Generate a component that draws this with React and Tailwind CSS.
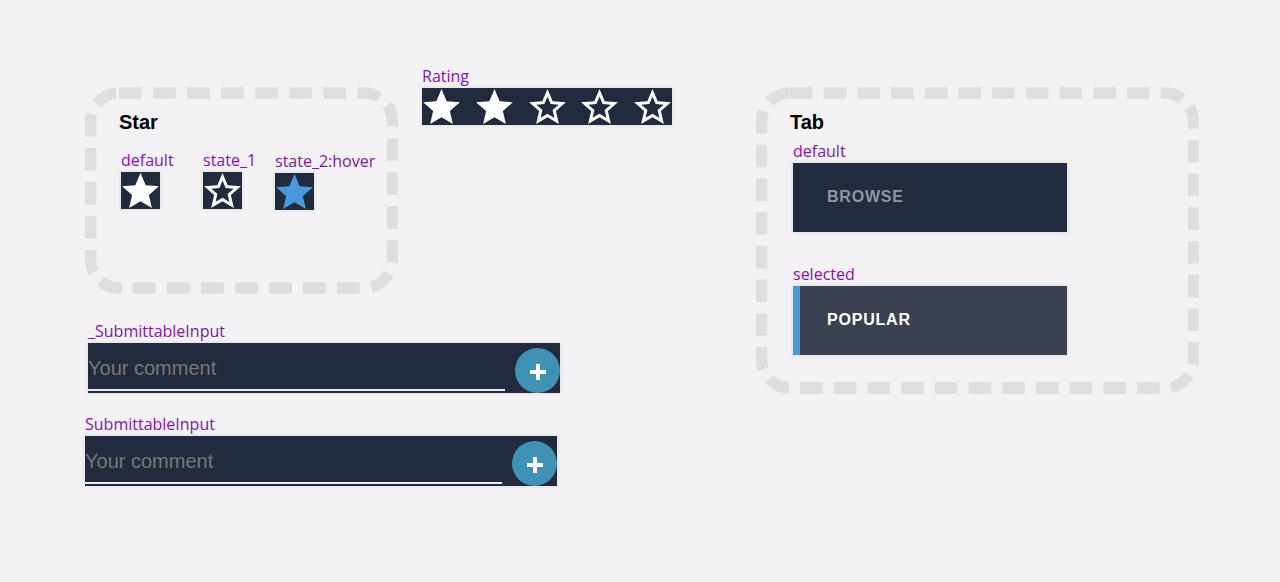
import { useState } from 'react';

const STAR_FULL = 'M12 17.27L18.18 21l-1.64-7.03L22 9.24l-7.19-.61L12 2 9.19 8.63 2 9.24l5.46 4.73L5.82 21z';
const STAR_OUTLINE = 'M22 9.24l-7.19-.62L12 2 9.19 8.63 2 9.24l5.46 4.73L5.82 21 12 17.27 18.18 21l-1.63-7.03L22 9.24zM12 15.4l-3.76 2.27 1-4.28-3.32-2.88 4.38-.38L12 6.1l1.71 4.04 4.38.38-3.32 2.88 1 4.28L12 15.4z';

function Star({ filled, hover, label, onClick }) {
  return (
    <button
      type="button"
      aria-label={label}
      onClick={onClick}
      className={`flex w-[39px] h-[37px] items-center justify-center ${hover ? 'text-[#4a98dc]' : 'text-white'}`}
    >
      <svg viewBox="2 2 20 19" className="w-[37px] h-[35px]" fill="currentColor" aria-hidden="true">
        <path d={filled ? STAR_FULL : STAR_OUTLINE} />
      </svg>
    </button>
  );
}

function Rating({ max = 5 }) {
  const [value, setValue] = useState(2);

  return (
    <div className="flex justify-between w-[250px] bg-[#212b3d] shadow-[0_0_4px_#d3d9dc]">
      {Array.from({ length: max }, (_, i) => (
        <Star key={i} filled={i < value} label={`Rate ${i + 1}`} onClick={() => setValue(i + 1)} />
      ))}
    </div>
  );
}

// Border dashes are drawn by hand, the browser picks its own dash length for border-dashed
function Frame({ title, dash, className, children }) {
  return (
    <section className={`relative pl-[34px] pt-[23px] ${className}`}>
      <svg className="absolute inset-0 w-full h-full pointer-events-none" aria-hidden="true">
        <rect
          x="5.5"
          y="6"
          rx="28.5"
          className="w-[calc(100%-11px)] h-[calc(100%-12px)]"
          fill="none"
          stroke="#dedede"
          strokeWidth="11.3"
          strokeDasharray={dash}
        />
      </svg>
      <h2 className="text-xl leading-6 font-bold text-black">{title}</h2>
      {children}
    </section>
  );
}

function Sample({ name, className = '', children }) {
  return (
    <div className={className}>
      <p className="pb-[3px] font-['Open_Sans',sans-serif] text-base leading-[18px] text-[#8015ac] whitespace-nowrap">
        {name}
      </p>
      {children}
    </div>
  );
}

function StarTile(props) {
  return (
    <div className="w-[39px] bg-[#212b3d] shadow-[0_0_4px_#d3d9dc]">
      <Star {...props} />
    </div>
  );
}

function SubmittableInput({ id, name, className = '' }) {
  return (
    <form className={className} onSubmit={(e) => e.preventDefault()}>
      <label htmlFor={id} className="block pb-[3px] font-['Open_Sans',sans-serif] text-base leading-[18px] text-[#8015ac]">
        {name}
      </label>
      <div className="flex items-end justify-between w-[472px] bg-[#212b3d] shadow-[0_0_4px_#d3d9dc]">
        <input
          id={id}
          type="text"
          placeholder="Your comment"
          className="w-[417px] h-12 pt-1 mb-0.5 border-b-2 border-[#e8eef2] text-xl text-white placeholder:text-[#777777] outline-none"
        />
        <button
          type="submit"
          aria-label="Submit"
          className="flex items-center justify-center w-[45px] h-[45px] rounded-full bg-[#3f91b6] text-white"
        >
          <svg viewBox="0 0 16 16" className="w-4 h-4 mt-0.5" fill="currentColor" aria-hidden="true">
            <path d="M6 0h4v6h6v4h-6v6H6v-6H0V6h6z" />
          </svg>
        </button>
      </div>
    </form>
  );
}

function Tab({ selected, children }) {
  return (
    <button
      type="button"
      aria-pressed={!!selected}
      className={`block w-[274px] h-[69px] border-l-[7px] pl-[27px] pb-0.5 text-left text-base font-bold tracking-wider uppercase
        shadow-[0_0_4px_#d3d9dc]
        ${selected ? 'border-[#4a98dc] bg-[#3a4252] text-white' : 'border-[#212b3d] bg-[#212b3d] text-[#8e95a1]'}`}
    >
      {children}
    </button>
  );
}

export default function App() {
  return (
    <main className="min-h-screen bg-[#f3f1f4] font-['Liberation_Sans',sans-serif]">
      <div className="flex items-start justify-between pl-[85px] pr-[81px] pt-[67px] pb-8">
        <div>
          <div className="flex items-start gap-6">
            <Frame title="Star" dash="22.7 11.34" className="mt-5 w-[313px] h-[207px]">
              <div className="flex pl-0.5 pt-[17px]">
                <Sample name="default" className="w-[82px]">
                  <StarTile filled label="Star" />
                </Sample>
                <Sample name="state_1" className="w-[72px]">
                  <StarTile label="Empty star" />
                </Sample>
                <Sample name="state_2:hover" className="w-[72px] pt-px">
                  <StarTile filled hover label="Hovered star" />
                </Sample>
              </div>
            </Frame>
            <Sample name="Rating">
              <Rating />
            </Sample>
          </div>

          <div className="flex flex-col items-start gap-[22px] pt-7">
            <SubmittableInput id="comment-base" name="_SubmittableInput" className="ml-[3px]" />
            <SubmittableInput id="comment" name="SubmittableInput" />
          </div>
        </div>

        <Frame title="Tab" dash="22.6 11.1" className="mt-5 w-[443px] h-[307px]">
          <div className="flex flex-col gap-[33px] pl-[3px] pt-2">
            <Sample name="default">
              <Tab>Browse</Tab>
            </Sample>
            <Sample name="selected">
              <Tab selected>Popular</Tab>
            </Sample>
          </div>
        </Frame>
      </div>
    </main>
  );
}
